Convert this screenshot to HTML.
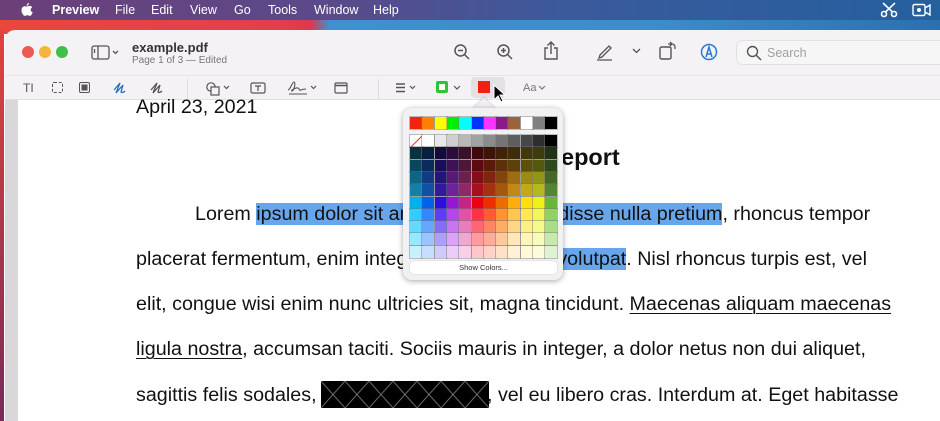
<!DOCTYPE html>
<html><head><meta charset="utf-8">
<style>
*{margin:0;padding:0;box-sizing:border-box}
html,body{width:940px;height:421px;overflow:hidden}
body{position:relative;font-family:"Liberation Sans",sans-serif;background:#fff}
.menubar{position:absolute;left:0;top:0;width:940px;height:20px;background:linear-gradient(90deg,#6c3f78 0%,#5a4a8a 35%,#3b5a9c 60%,#245f9e 100%);color:#fff;font-size:12.5px}
.menubar span{position:absolute;top:3px}
.band{position:absolute;left:0;top:20px;width:940px;height:14px;background:linear-gradient(90deg,#e8483c 0%,#e23e4e 30%,#e0364e 33%,#3f90d0 35%,#3d8ccb 70%,#2a70b0 100%)}
.win{position:absolute;left:5px;top:30px;width:935px;height:70px;background:#f4f2f4;border-radius:10px 0 0 0;overflow:hidden}
.side{position:absolute;left:0;top:30px;width:4px;height:391px;background:linear-gradient(#e0443c,#7a2a5a)}
.t{position:absolute;color:#555}
.doc{position:absolute;left:5px;top:99px;width:935px;height:322px;background:#fff;border-top:1px solid #e0dee0}
.strip{position:absolute;left:0;top:0;width:13px;height:322px;background:#d9d7d9}
.line{position:absolute;font-size:19.7px;color:#111;white-space:nowrap;left:136px}
.hl{background:#68a6ec}
u{text-decoration:underline;text-decoration-thickness:1px;text-underline-offset:3px}
.pop{position:absolute;left:403px;top:108px;width:160px;height:172px;background:#f1f0f2;border-radius:9px;box-shadow:0 1px 6px rgba(0,0,0,.35)}
.arrow{position:absolute;left:476px;top:101px;width:16px;height:16px;background:#f1f0f2;transform:rotate(45deg);box-shadow:-1px -1px 2px rgba(0,0,0,.15)}
.c{position:absolute;width:12px;height:12px;outline:1px solid rgba(120,120,120,.45)}
</style></head><body>
<div class="menubar">
<svg style="position:absolute;left:21px;top:3px" width="12" height="14" viewBox="0 0 12 14"><path d="M8 0c0 1.5-1 2.7-2.3 2.7C5.6 1.3 6.7.1 8 0zM6 3.5c.7 0 1.7-.7 2.7-.6 1 0 2 .5 2.5 1.3-2.2 1.3-1.9 4.3.5 5.1-.5 1.4-1.5 3.6-2.8 3.6-1 0-1.3-.6-2.5-.6s-1.6.6-2.6.6C2.4 12.9.5 10 .5 7.3.5 4.6 2.3 3.3 3.8 3.3c1 0 1.6.6 2.2.2z" fill="#fff"/></svg>
<span style="left:52px;font-weight:bold">Preview</span>
<span style="left:115px">File</span><span style="left:151px">Edit</span><span style="left:190px">View</span><span style="left:234px">Go</span><span style="left:268px">Tools</span><span style="left:314px">Window</span><span style="left:373px">Help</span>
<svg style="position:absolute;left:880px;top:2px" width="18" height="16" viewBox="0 0 18 16"><circle cx="4" cy="12" r="2.5" fill="none" stroke="#fff" stroke-width="1.6"/><circle cx="14" cy="12" r="2.5" fill="none" stroke="#fff" stroke-width="1.6"/><path d="M5.5 10L15 1M12.5 10L3 1" stroke="#fff" stroke-width="1.6"/></svg>
<svg style="position:absolute;left:912px;top:3px" width="20" height="14" viewBox="0 0 20 14"><rect x="1" y="1.5" width="12" height="11" rx="1.5" fill="none" stroke="#fff" stroke-width="1.4"/><circle cx="7" cy="7" r="2" fill="#fff"/><path d="M13 5l5-3v10l-5-3" fill="none" stroke="#fff" stroke-width="1.4"/></svg>
</div>
<div class="band"></div>
<div class="side"></div>
<div class="win">
 <div style="position:absolute;left:17px;top:16px;width:12px;height:12px;border-radius:50%;background:#ee5a52"></div>
 <div style="position:absolute;left:34px;top:16px;width:12px;height:12px;border-radius:50%;background:#f5b53a"></div>
 <div style="position:absolute;left:51px;top:16px;width:12px;height:12px;border-radius:50%;background:#3fbf49"></div>
 <svg style="position:absolute;left:86px;top:15px" width="30" height="15" viewBox="0 0 30 15"><rect x="1" y="1" width="17" height="13" rx="2" fill="none" stroke="#555" stroke-width="1.3"/><path d="M7 1v13M3.5 4v4" stroke="#555" stroke-width="1.3"/><path d="M22 6l2.5 2.5L27 6" fill="none" stroke="#555" stroke-width="1.3"/></svg>
 <div class="t" style="left:127px;top:10px;font-size:13px;font-weight:bold;color:#333">example.pdf</div>
 <div class="t" style="left:127px;top:25px;font-size:10px;color:#777">Page 1 of 3 — Edited</div>
 <svg style="position:absolute;left:448px;top:13px" width="18" height="18" viewBox="0 0 18 18"><circle cx="7.5" cy="7.5" r="5.5" fill="none" stroke="#555" stroke-width="1.5"/><path d="M5 7.5h5M11.5 11.5l4.5 4.5" stroke="#555" stroke-width="1.5"/></svg>
 <svg style="position:absolute;left:491px;top:13px" width="18" height="18" viewBox="0 0 18 18"><circle cx="7.5" cy="7.5" r="5.5" fill="none" stroke="#555" stroke-width="1.5"/><path d="M5 7.5h5M7.5 5v5M11.5 11.5l4.5 4.5" stroke="#555" stroke-width="1.5"/></svg>
 <svg style="position:absolute;left:538px;top:11px" width="16" height="20" viewBox="0 0 16 20"><path d="M5 7H2v11h12V7h-3M8 13V1M4.5 4.5L8 1l3.5 3.5" fill="none" stroke="#555" stroke-width="1.4"/></svg>
 <svg style="position:absolute;left:591px;top:13px" width="18" height="18" viewBox="0 0 18 18"><path d="M4 12l9-9 2 2-9 9-3 1zM1 17h15" fill="none" stroke="#555" stroke-width="1.3"/></svg>
 <svg style="position:absolute;left:627px;top:18px" width="9" height="6" viewBox="0 0 9 6"><path d="M1 1l3.5 3.5L8 1" fill="none" stroke="#555" stroke-width="1.3"/></svg>
 <svg style="position:absolute;left:654px;top:11px" width="18" height="20" viewBox="0 0 18 20"><rect x="1" y="6" width="11" height="12" rx="1.5" fill="none" stroke="#555" stroke-width="1.4"/><path d="M9 3h4a3 3 0 013 3v2M11 1l2 2-2 2" fill="none" stroke="#555" stroke-width="1.3"/></svg>
 <svg style="position:absolute;left:695px;top:13px" width="18" height="18" viewBox="0 0 18 18"><circle cx="9" cy="9" r="7.5" fill="none" stroke="#2a7ad6" stroke-width="1.5"/><path d="M6 14L9 4l3 10M7 11h4" fill="none" stroke="#2a7ad6" stroke-width="1.5"/></svg>
 <div style="position:absolute;left:731px;top:10px;width:220px;height:25px;border:1px solid #e2e0e2;border-radius:7px;background:#f7f6f7"></div>
 <svg style="position:absolute;left:741px;top:15px" width="16" height="16" viewBox="0 0 16 16"><circle cx="6.5" cy="6.5" r="5" fill="none" stroke="#555" stroke-width="1.4"/><path d="M10 10l5 5" stroke="#555" stroke-width="1.5"/></svg>
 <div class="t" style="left:762px;top:16px;font-size:12.5px;color:#a0a0a0">Search</div>
 <div style="position:absolute;left:0;top:45px;width:940px;height:1px;background:#e6e4e6"></div>
 <div class="t" style="left:18px;top:51px;font-size:12px">T<span>I</span></div>
 <div style="position:absolute;left:47px;top:52px;width:11px;height:11px;border:1.2px dashed #555;border-radius:2px"></div>
 <div style="position:absolute;left:74px;top:52px;width:11px;height:11px;border:1.2px dashed #555;border-radius:2px;background:#555;box-shadow:inset 0 0 0 1.5px #f4f2f4"></div>
 <svg style="position:absolute;left:108px;top:51px" width="14" height="14" viewBox="0 0 14 14"><path d="M1 9l6-7-4 10 7-8-2 7c1 1 3 0 4-1" fill="none" stroke="#2a6fc9" stroke-width="1.3"/></svg>
 <svg style="position:absolute;left:145px;top:51px" width="14" height="14" viewBox="0 0 14 14"><path d="M1 9l6-7-4 10 7-8-2 7c1 1 3 0 4-1" fill="none" stroke="#555" stroke-width="1.3"/></svg>
 <div style="position:absolute;left:182px;top:49px;width:1px;height:20px;background:#ddd"></div>
 <svg style="position:absolute;left:201px;top:51px" width="30" height="15" viewBox="0 0 30 15"><circle cx="5" cy="6" r="4.2" fill="none" stroke="#555" stroke-width="1.2"/><rect x="5" y="6" width="8" height="8" fill="#f4f2f4" stroke="#555" stroke-width="1.2"/><path d="M18 5l2.5 2.5L23 5" fill="none" stroke="#555" stroke-width="1.2"/></svg>
 <svg style="position:absolute;left:245px;top:52px" width="16" height="12" viewBox="0 0 16 12"><rect x="1" y="1" width="14" height="10" rx="1.5" fill="none" stroke="#555" stroke-width="1.2"/><path d="M5 4h6M8 4v5" stroke="#555" stroke-width="1.2"/></svg>
 <svg style="position:absolute;left:282px;top:50px" width="32" height="16" viewBox="0 0 32 16"><path d="M1 10c3-1 4-8 6-8s0 9-2 9 4-4 6-3 1 3 3 2 3-1 5-1M2 14h18" fill="none" stroke="#555" stroke-width="1.1"/><path d="M24 6l2.5 2.5L29 6" fill="none" stroke="#555" stroke-width="1.2"/></svg>
 <svg style="position:absolute;left:329px;top:52px" width="14" height="12" viewBox="0 0 14 12"><rect x="1" y="1" width="12" height="10" rx="1" fill="none" stroke="#555" stroke-width="1.2"/><path d="M1 3.5h12" stroke="#555" stroke-width="1.6"/></svg>
 <div style="position:absolute;left:373px;top:49px;width:1px;height:20px;background:#ddd"></div>
 <svg style="position:absolute;left:391px;top:53px" width="24" height="10" viewBox="0 0 24 10"><path d="M0 1h9M0 4.5h9M0 8.5h9" stroke="#555" stroke-width="1.6"/><path d="M14 3l2.5 2.5L19 3" fill="none" stroke="#555" stroke-width="1.2"/></svg>
 <div style="position:absolute;left:431px;top:51px;width:12px;height:12px;background:#2fc33a;border-radius:2px"><div style="position:absolute;left:3px;top:3px;width:6px;height:6px;background:#fff"></div></div>
 <svg style="position:absolute;left:448px;top:55px" width="8" height="6" viewBox="0 0 8 6"><path d="M1 1l3 3 3-3" fill="none" stroke="#555" stroke-width="1.2"/></svg>
 <div style="position:absolute;left:466px;top:47px;width:34px;height:21px;background:#e3e1e3;border-radius:4px"></div>
 <div style="position:absolute;left:473px;top:51px;width:12px;height:12px;background:#f2210f"></div>
 <div class="t" style="left:518px;top:52px;font-size:11px;color:#777">Aa</div>
 <svg style="position:absolute;left:533px;top:55px" width="8" height="6" viewBox="0 0 8 6"><path d="M1 1l3 3 3-3" fill="none" stroke="#777" stroke-width="1.2"/></svg>
</div>
<div class="doc"><div class="strip"></div></div>
<div class="line" style="top:96px">April 23, 2021</div>
<div class="line" style="top:144px;left:561px;font-weight:bold;font-size:23.5px">eport</div>
<div class="line" style="top:203px;left:195px">Lorem <span class="hl">ipsum dolor sit amet, ligula suspendisse nulla pretium</span>, rhoncus tempor</div>
<div class="line" style="top:248px">placerat fermentum, enim integer ad <span class="hl">vestibulum volutpat</span>. Nisl rhoncus turpis est, vel</div>
<div class="line" style="top:293px">elit, congue wisi enim nunc ultricies sit, magna tincidunt. <u>Maecenas aliquam maecenas</u></div>
<div class="line" style="top:338px"><u>ligula nostra</u>, accumsan taciti. Sociis mauris in integer, a dolor netus non dui aliquet,</div>
<div class="line" style="top:384px">sagittis felis sodales,</div>
<div class="line" style="top:384px;left:487px">, vel eu libero cras. Interdum at. Eget habitasse</div>
<svg style="position:absolute;left:321px;top:381px" width="168" height="27" viewBox="0 0 168 27"><rect width="168" height="27" fill="#000"/><path d="M0 0l24 27M24 0l24 27M48 0l24 27M72 0l24 27M96 0l24 27M120 0l24 27M144 0l24 27M24 0L0 27M48 0L24 27M72 0L48 27M96 0L72 27M120 0L96 27M144 0l-24 27M168 0l-24 27" stroke="#6a6a6a" stroke-width="1"/></svg>
<svg style="position:absolute;left:493px;top:84px" width="14" height="20" viewBox="0 0 14 20"><path d="M1 1v15l4-4 3 6 2-1-3-6h5z" fill="#000" stroke="#fff" stroke-width="1"/></svg>
<div class="arrow"></div>
<div class="pop" id="pop">
 <div style="position:absolute;left:7px;top:153px;width:147px;height:13px;background:#fff;border-radius:4px;box-shadow:0 0 1px rgba(0,0,0,.3);font-size:7.5px;text-align:center;line-height:13px;color:#333">Show Colors...</div>
</div>
<script>
var pp=document.getElementById('pop');
function cell(x,y,c){var d=document.createElement('div');d.className='c';d.style.left=x+'px';d.style.top=y+'px';d.style.background=c;pp.appendChild(d);return d;}
var topRow=['#f4230f','#ff8000','#ffff00','#00f000','#00ffff','#0033ff','#ff33ff','#8a1a8a','#9a6438','#ffffff','#808080','#000000'];
for(var i=0;i<12;i++)cell(7+i*12.3,9,topRow[i]);
var g=['#ffffff','#ffffff','#e8e8e8','#cfcfcf','#b8b8b8','#a2a2a2','#8c8c8c','#757575','#5e5e5e','#474747','#2e2e2e','#000000'];
var first=null;
for(var i=0;i<12;i++){var d=cell(7+i*12.3,27,g[i]);if(i==0)first=d;}
first.innerHTML='<svg width="12" height="12"><path d="M0 12L12 0" stroke="#d33" stroke-width="1"/></svg>';
var hues=[195,215,250,280,325,355,12,28,40,52,62,95];
var sats=[100,100,90,80,70,100,100,100,100,100,90,55];
var L=[14,20,28,36,46,60,70,80,89];
for(var r=0;r<9;r++)for(var i=0;i<12;i++){var l=L[r];var s=sats[i];if(r<4)s=s*0.8;var lum=l;if(hues[i]>=40&&hues[i]<=62&&r>=2)lum=Math.min(92,l+6);cell(7+i*12.3,39.3+r*12.3,'hsl('+hues[i]+','+s+'%,'+lum+'%)');}
</script>
</body></html>
